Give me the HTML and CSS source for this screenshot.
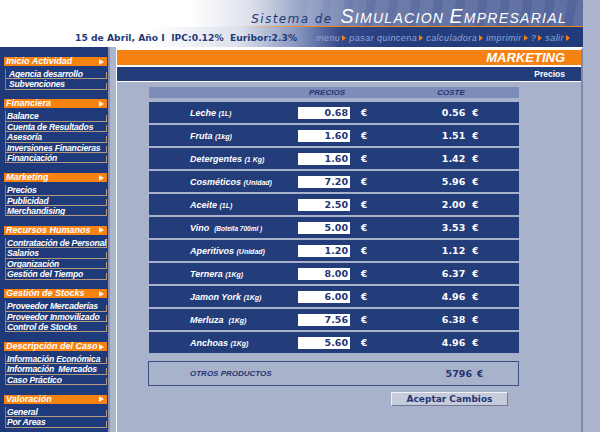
FILE: index.html
```html
<!DOCTYPE html>
<html lang="es">
<head>
  <meta charset="UTF-8">
  <meta name="viewport" content="width=device-width, initial-scale=1.0">
  <link rel="stylesheet" href="styles.css">
</head>
<body>
  <div class="page">
    <div class="top">
      <div class="top-title">
        <span class="brand-a">Sistema de</span>
        <span class="brand-b"><span class="big">S</span>IMULACION <span class="big">E</span>MPRESARIAL</span>
      </div>
      <div class="top-info">
        <span class="date">15 de Abril, Año I&nbsp; IPC:0.12%&nbsp; Euribor:2.3%</span>
        <ul class="nav">
          <li>menu</li>
          <li>pasar quincena</li>
          <li>calculadora</li>
          <li>imprimir</li>
          <li>?</li>
          <li>salir</li>
        </ul>
      </div>
    </div>

    <div class="layout">
      <nav class="side">
        <div class="group">
          <div class="group-title">Inicio Actividad <span class="arrow"></span></div>
          <a class="link indent">Agencia desarrollo</a>
          <a class="link indent">Subvenciones</a>
        </div>
        <div class="group">
          <div class="group-title">Financiera <span class="arrow"></span></div>
          <a class="link">Balance</a>
          <a class="link">Cuenta de Resultados</a>
          <a class="link">Asesoría</a>
          <a class="link">Inversiones Financieras</a>
          <a class="link">Financiación</a>
        </div>
        <div class="group">
          <div class="group-title">Marketing <span class="arrow"></span></div>
          <a class="link">Precios</a>
          <a class="link">Publicidad</a>
          <a class="link">Merchandising</a>
        </div>
        <div class="group">
          <div class="group-title">Recursos Humanos <span class="arrow"></span></div>
          <a class="link">Contratación de Personal</a>
          <a class="link">Salarios</a>
          <a class="link">Organización</a>
          <a class="link">Gestión del Tiempo</a>
        </div>
        <div class="group">
          <div class="group-title">Gestión de Stocks <span class="arrow"></span></div>
          <a class="link">Proveedor Mercaderías</a>
          <a class="link">Proveedor Inmovilizado</a>
          <a class="link">Control de Stocks</a>
        </div>
        <div class="group">
          <div class="group-title">Descripción del Caso <span class="arrow"></span></div>
          <a class="link">Información Económica</a>
          <a class="link">Información&nbsp; Mercados</a>
          <a class="link">Caso Práctico</a>
        </div>
        <div class="group">
          <div class="group-title">Valoración <span class="arrow"></span></div>
          <a class="link">General</a>
          <a class="link">Por Areas</a>
        </div>
      </nav>

      <main class="main">
        <div class="title-bar">MARKETING</div>
        <div class="sub-bar">Precios</div>
        <div class="content">
          <div class="grid-head">
            <span class="h-precio">PRECIOS</span>
            <span class="h-coste">COSTE</span>
          </div>

          <div class="row">
            <span class="label">Leche <small>(1L)</small></span>
            <span class="price-box">0.68</span><span class="euro">€</span>
            <span class="cost">0.56</span><span class="euro-cost">€</span>
          </div>
          <div class="row">
            <span class="label">Fruta <small>(1kg)</small></span>
            <span class="price-box">1.60</span><span class="euro">€</span>
            <span class="cost">1.51</span><span class="euro-cost">€</span>
          </div>
          <div class="row">
            <span class="label">Detergentes <small>(1 Kg)</small></span>
            <span class="price-box">1.60</span><span class="euro">€</span>
            <span class="cost">1.42</span><span class="euro-cost">€</span>
          </div>
          <div class="row">
            <span class="label">Cosméticos <small>(Unidad)</small></span>
            <span class="price-box">7.20</span><span class="euro">€</span>
            <span class="cost">5.96</span><span class="euro-cost">€</span>
          </div>
          <div class="row">
            <span class="label">Aceite <small>(1L)</small></span>
            <span class="price-box">2.50</span><span class="euro">€</span>
            <span class="cost">2.00</span><span class="euro-cost">€</span>
          </div>
          <div class="row">
            <span class="label">Vino&nbsp; <small class="tiny">(Botella 700ml )</small></span>
            <span class="price-box">5.00</span><span class="euro">€</span>
            <span class="cost">3.53</span><span class="euro-cost">€</span>
          </div>
          <div class="row">
            <span class="label">Aperitivos <small>(Unidad)</small></span>
            <span class="price-box">1.20</span><span class="euro">€</span>
            <span class="cost">1.12</span><span class="euro-cost">€</span>
          </div>
          <div class="row">
            <span class="label">Ternera <small>(1Kg)</small></span>
            <span class="price-box">8.00</span><span class="euro">€</span>
            <span class="cost">6.37</span><span class="euro-cost">€</span>
          </div>
          <div class="row">
            <span class="label">Jamon York <small>(1Kg)</small></span>
            <span class="price-box">6.00</span><span class="euro">€</span>
            <span class="cost">4.96</span><span class="euro-cost">€</span>
          </div>
          <div class="row">
            <span class="label">Merluza&nbsp; <small>(1Kg)</small></span>
            <span class="price-box">7.56</span><span class="euro">€</span>
            <span class="cost">6.38</span><span class="euro-cost">€</span>
          </div>
          <div class="row">
            <span class="label">Anchoas <small>(1Kg)</small></span>
            <span class="price-box">5.60</span><span class="euro">€</span>
            <span class="cost">4.96</span><span class="euro-cost">€</span>
          </div>

          <div class="others">
            <span class="others-label">OTROS PRODUCTOS</span>
            <span class="others-value">5796</span><span class="others-euro">€</span>
          </div>

          <div class="actions">
            <button class="accept-btn">Aceptar Cambios</button>
          </div>
        </div>
      </main>
    </div>
  </div>
</body>
</html>
```

FILE: styles.css
```css
* {
  box-sizing: border-box;
}

body {
  margin: 0;
  background: #acb4ce;
  font-family: "Liberation Sans", Arial, sans-serif;
}

.page {
  width: 583px;
  min-height: 432px;
  display: flex;
  flex-direction: column;
}

/* cabecera */
.top {
  height: 47px;
  overflow: hidden;
}

.top-title {
  height: 27px;
  display: flex;
  justify-content: flex-end;
  align-items: baseline;
  padding: 5px 16px 0 0;
  border-bottom: 1px solid transparent;
  border-image: linear-gradient(90deg, rgba(246,130,18,0) 0, rgba(246,130,18,0) 230px, #f68212 310px, #f68212 583px) 1;
  background:
    repeating-linear-gradient(100deg, rgba(255,255,255,0) 0, rgba(255,255,255,0) 9px, rgba(255,255,255,0.07) 9px, rgba(255,255,255,0.07) 22px) 300px 0 / 283px 100% no-repeat,
    linear-gradient(90deg, #ffffff 0, #ffffff 190px, #dde1ec 250px, #9aa6c8 300px, #6676a6 360px, #586a9e 460px, #52649a 583px);
}

.brand-a {
  font-family: "DejaVu Sans", sans-serif;
  font-style: italic;
  font-size: 12px;
  letter-spacing: 1.4px;
  color: #1f3a78;
  margin-right: 8px;
}

.brand-b {
  font-style: italic;
  font-size: 14px;
  letter-spacing: 1.3px;
  color: #ffffff;
}

.brand-b .big {
  font-size: 19.5px;
}

.top-info {
  height: 20px;
  display: flex;
  align-items: center;
  padding-left: 75px;
  background: linear-gradient(90deg, #ffffff 0, #ffffff 150px, #dce0ec 240px, #8391bb 300px, #34498a 340px, #243d7c 400px, #213a7a 583px);
}

.date {
  font-family: "DejaVu Sans", sans-serif;
  font-weight: bold;
  font-size: 9.2px;
  color: #1f3a78;
  white-space: nowrap;
}

.nav {
  margin: 0 0 0 auto;
  padding: 1px 10px 0 0;
  list-style: none;
  display: flex;
}

.nav li {
  font-style: italic;
  font-size: 9px;
  letter-spacing: 0.45px;
  color: #93a6da;
  white-space: nowrap;
}

.nav li::after {
  content: "";
  display: inline-block;
  margin: 0 3px 0 2px;
  border-left: 4px solid #f68212;
  border-top: 3px solid transparent;
  border-bottom: 3px solid transparent;
}

/* cuerpo */
.layout {
  flex: 1;
  display: flex;
}

/* menu lateral */
.side {
  width: 110px;
  padding: 10px 1px 0 4px;
  background: #1f3a7a;
  border-right: 2px solid #8891b0;
}

.group {
  margin-bottom: 9.7px;
}

.group-title {
  display: flex;
  align-items: center;
  justify-content: space-between;
  height: 9px;
  margin-bottom: 3px;
  padding: 0 3px 0 2px;
  background: #f68212;
  color: #ffffff;
  font-size: 9px;
  font-weight: bold;
  font-style: italic;
  line-height: 9px;
  white-space: nowrap;
}

.arrow {
  width: 0;
  height: 0;
  border-left: 5px solid #ffffff;
  border-top: 3px solid transparent;
  border-bottom: 3px solid transparent;
  opacity: 0.9;
}

.link {
  display: block;
  height: 10.4px;
  margin-left: 1px;
  padding-left: 1px;
  border-bottom: 1px solid #b49a7a;
  border-left: 1px solid #8a7f80;
  background: linear-gradient(#b49a7a, #b49a7a) right bottom / 1px 6px no-repeat;
  color: #ffffff;
  font-size: 8.6px;
  font-weight: bold;
  font-style: italic;
  line-height: 10px;
  letter-spacing: -0.2px;
  white-space: nowrap;
  overflow: hidden;
  text-decoration: none;
}

.link.indent {
  padding-left: 3px;
}

/* contenido principal */
.main {
  flex: 1;
  margin-left: 6px;
  background: #a9b2cb;
  border-top: 3px solid #ffffff;
  border-left: 1px solid #ffffff;
  border-right: 2px solid #7f88a8;
}

.title-bar {
  height: 15px;
  padding-right: 16px;
  background: #f68212;
  color: #ffffff;
  font-size: 13px;
  font-weight: bold;
  font-style: italic;
  line-height: 16px;
  text-align: right;
  border-bottom: 2px solid #ffffff;
  box-sizing: content-box;
}

.sub-bar {
  height: 14px;
  padding-right: 16px;
  background: #233d7b;
  color: #ffffff;
  font-size: 8.5px;
  font-weight: bold;
  line-height: 14px;
  text-align: right;
  border-bottom: 1px solid #ffffff;
  box-sizing: content-box;
}

.content {
  padding: 5px 0 0 32px;
}

.grid-head {
  width: 370px;
  height: 11px;
  display: flex;
  background: #7d8cb8;
  color: #1f3573;
  font-size: 8px;
  font-weight: bold;
  font-style: italic;
  line-height: 11px;
}

.h-precio {
  margin-left: 139px;
  width: 78px;
  text-align: center;
}

.h-coste {
  margin-left: 46px;
  width: 78px;
  text-align: center;
}

.row {
  width: 370px;
  height: 21px;
  margin-top: 2px;
  display: flex;
  align-items: center;
  background: #233d7b;
  color: #ffffff;
}

.grid-head + .row {
  margin-top: 4px;
}

.label {
  width: 149px;
  padding-left: 41px;
  font-size: 9px;
  font-weight: bold;
  font-style: italic;
  white-space: nowrap;
}

.label small {
  font-size: 7px;
}

.label small.tiny {
  font-size: 6.5px;
}

.price-box {
  width: 52px;
  height: 12px;
  padding-right: 2px;
  background: #ffffff;
  color: #1f3573;
  font-family: "DejaVu Sans", sans-serif;
  font-size: 9.5px;
  font-weight: bold;
  line-height: 12px;
  text-align: right;
}

.euro,
.euro-cost {
  font-family: "DejaVu Sans", sans-serif;
  font-size: 9px;
  font-weight: bold;
}

.euro {
  margin-left: 11px;
}

.cost {
  width: 98px;
  font-family: "DejaVu Sans", sans-serif;
  font-size: 9.5px;
  font-weight: bold;
  text-align: right;
}

.euro-cost {
  margin-left: 7px;
}

/* otros productos */
.others {
  width: 371px;
  height: 25px;
  margin: 8px 0 0 -1px;
  display: flex;
  align-items: center;
  border: 1px solid #3b4f86;
  color: #1f3573;
}

.others-label {
  width: 149px;
  padding-left: 41px;
  font-size: 8px;
  font-weight: bold;
  font-style: italic;
  white-space: nowrap;
}

.others-value {
  width: 174px;
  font-family: "DejaVu Sans", sans-serif;
  font-size: 9.5px;
  font-weight: bold;
  text-align: right;
}

.others-euro {
  margin-left: 5px;
  font-family: "DejaVu Sans", sans-serif;
  font-size: 9px;
  font-weight: bold;
}

.actions {
  width: 370px;
  display: flex;
  justify-content: flex-end;
  padding-right: 11px;
  margin-top: 6px;
}

.accept-btn {
  width: 117px;
  height: 14px;
  padding: 0;
  background: #c6cbdc;
  border: 1px solid;
  border-color: #f0f2f7 #6f7897 #6f7897 #f0f2f7;
  color: #1f3573;
  font-family: "DejaVu Sans", sans-serif;
  font-size: 9px;
  font-weight: bold;
  line-height: 12px;
  cursor: pointer;
}
```
